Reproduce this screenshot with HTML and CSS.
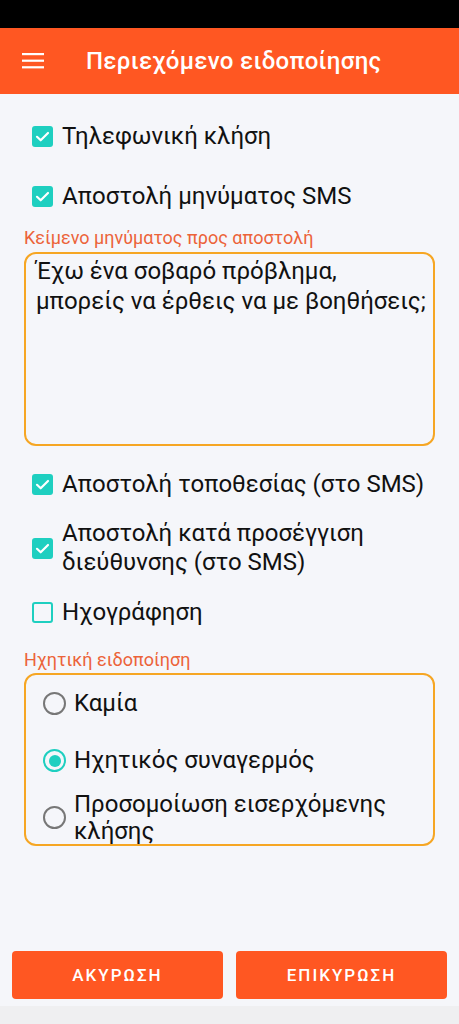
FILE: index.html
```html
<!DOCTYPE html>
<html lang="el">
<head>
<meta charset="utf-8">
<title>Περιεχόμενο ειδοποίησης</title>
<link rel="stylesheet" href="styles.css">
</head>
<body>
<div class="screen">
  <div class="status"></div>
  <header class="appbar">
    <svg class="menu" width="22" height="16" viewBox="0 0 22 16"><rect x="0" y="0" width="22" height="2.2" fill="#fff"/><rect x="0" y="6.6" width="22" height="2.2" fill="#fff"/><rect x="0" y="13.2" width="22" height="2.2" fill="#fff"/></svg>
    <h1 class="title">Περιεχόμενο ειδοποίησης</h1>
  </header>
  <main class="content">
    <div class="check-row"><span class="cb on"><svg viewBox="0 0 21 21" width="21" height="21"><path d="M5 10.8 L8.7 14.3 L16 7" fill="none" stroke="#fff" stroke-width="2.2" stroke-linecap="round" stroke-linejoin="round"/></svg></span><span class="lbl">Τηλεφωνική κλήση</span></div>
    <div class="check-row"><span class="cb on"><svg viewBox="0 0 21 21" width="21" height="21"><path d="M5 10.8 L8.7 14.3 L16 7" fill="none" stroke="#fff" stroke-width="2.2" stroke-linecap="round" stroke-linejoin="round"/></svg></span><span class="lbl">Αποστολή μηνύματος SMS</span></div>
    <div class="field-label first">Κείμενο μηνύματος προς αποστολή</div>
    <div class="textbox">Έχω ένα σοβαρό πρόβλημα, μπορείς να έρθεις να με βοηθήσεις;</div>
    <div class="check-row after-box"><span class="cb on"><svg viewBox="0 0 21 21" width="21" height="21"><path d="M5 10.8 L8.7 14.3 L16 7" fill="none" stroke="#fff" stroke-width="2.2" stroke-linecap="round" stroke-linejoin="round"/></svg></span><span class="lbl">Αποστολή τοποθεσίας (στο SMS)</span></div>
    <div class="check-row"><span class="cb on"><svg viewBox="0 0 21 21" width="21" height="21"><path d="M5 10.8 L8.7 14.3 L16 7" fill="none" stroke="#fff" stroke-width="2.2" stroke-linecap="round" stroke-linejoin="round"/></svg></span><span class="lbl">Αποστολή κατά προσέγγιση<br>διεύθυνσης (στο SMS)</span></div>
    <div class="check-row"><span class="cb off"></span><span class="lbl">Ηχογράφηση</span></div>
    <div class="field-label">Ηχητική ειδοποίηση</div>
    <div class="radiobox">
      <div class="radio-row"><span class="rb"></span><span class="lbl">Καμία</span></div>
      <div class="radio-row"><span class="rb sel"></span><span class="lbl">Ηχητικός συναγερμός</span></div>
      <div class="radio-row"><span class="rb"></span><span class="lbl">Προσομοίωση εισερχόμενης<br>κλήσης</span></div>
    </div>
  </main>
  <footer class="actions">
    <button class="btn">ΑΚΥΡΩΣΗ</button>
    <button class="btn">ΕΠΙΚΥΡΩΣΗ</button>
  </footer>
  <div class="navbar"></div>
</div>
</body>
</html>
```
FILE: styles.css
```css
* { box-sizing: border-box; }
html, body { margin: 0; padding: 0; }
body {
  font-family: Roboto, "Noto Sans", "DejaVu Sans", sans-serif;
  background: #f5f6fa;
  color: #111;
}
.screen {
  width: 459px;
  height: 1024px;
  display: flex;
  flex-direction: column;
  overflow: hidden;
}
.status { height: 28px; background: #000; flex: none; }
.appbar {
  height: 66px;
  flex: none;
  background: #ff5722;
  display: flex;
  align-items: center;
  padding-left: 22px;
}
.menu { display: block; }
.title {
  margin: 0 0 0 42px;
  font-size: 24px;
  font-weight: 500;
  color: #fff;
  letter-spacing: 0.3px;
}
.content {
  flex: 1;
  padding: 12px 24px 0 24px;
  display: flex;
  flex-direction: column;
}
.check-row {
  display: flex;
  align-items: center;
  min-height: 60px;
  padding: 5px 0 5px 8px;
}
.check-row.after-box { margin-top: 8px; }
.lbl {
  font-size: 24px;
  line-height: 29px;
  color: #111;
}
.cb {
  width: 21px;
  height: 21px;
  border-radius: 3px;
  flex: none;
  margin-right: 9px;
}
.cb svg { display: block; }
.cb.on { background: #1ecfc0; }
.cb.off { border: 2px solid #1ecfc0; background: transparent; }
.field-label {
  font-size: 18px;
  line-height: 20px;
  color: #ec6339;
  margin-top: 8px;
}
.field-label.first { margin-top: 2px; }
.textbox {
  margin-top: 4px;
  height: 194px;
  border: 2px solid #f6a623;
  border-radius: 12px;
  padding: 2px 2px 2px 10px;
  font-size: 24px;
  line-height: 30px;
  color: #111;
}
.radiobox {
  margin-top: 3px;
  height: 173px;
  border: 2px solid #f6a623;
  border-radius: 12px;
  padding: 0 0 0 17px;
}
.radio-row {
  display: flex;
  align-items: center;
  height: 57px;
}
.radio-row .lbl { line-height: 27px; }
.rb {
  width: 23px;
  height: 23px;
  border-radius: 50%;
  border: 2.5px solid #777;
  flex: none;
  margin-right: 8px;
  display: flex;
  align-items: center;
  justify-content: center;
}
.rb.sel { border-color: #1ecfc0; }
.rb.sel::after {
  content: "";
  width: 12px;
  height: 12px;
  border-radius: 50%;
  background: #1ecfc0;
}
.actions {
  flex: none;
  display: flex;
  gap: 13px;
  padding: 0 12px 7px 12px;
}
.btn {
  flex: 1;
  height: 48px;
  border: none;
  border-radius: 4px;
  background: #ff5722;
  color: #fff;
  font-family: Roboto, "Noto Sans", sans-serif;
  font-size: 17px;
  font-weight: 500;
  letter-spacing: 2px;
}
.navbar { height: 18px; flex: none; background: #efeff1; }
```
